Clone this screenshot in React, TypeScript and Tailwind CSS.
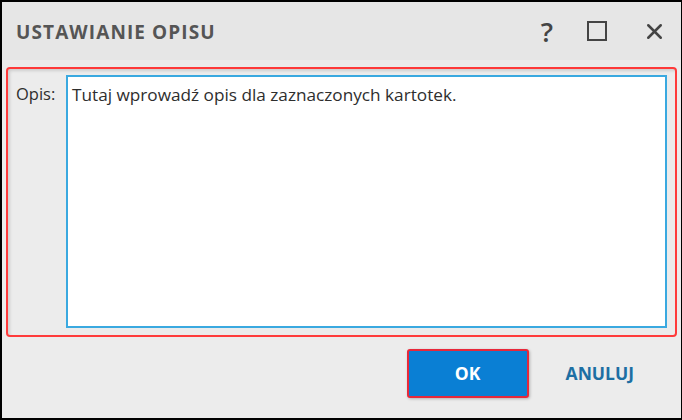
import { X } from "lucide-react";

export default function App() {
    return <>
        <div className="w-[682px] h-[420px] flex flex-col bg-[#ececec] border-2 border-r border-black" style={{ fontFamily: '"Open Sans", "Liberation Sans", sans-serif' }}>
            {/* title bar */}
            <div className="flex items-center h-[58px] shrink-0 bg-[#e6e6e6] pl-[14px] pr-[14px]">
                <h1 className="text-[19px] font-bold text-[#555555] tracking-[1.1px] flex-1 pt-[2px]">USTAWIANIE OPISU</h1>
                <div className="flex items-center text-[#444444]">
                    <span className="text-[27px] leading-none font-semibold w-[14px] text-center mr-[33px]">?</span>
                    <div className="w-[20px] h-[20px] border-[2.5px] border-[#444444] mr-[35px]" />
                    <X className="w-[25px] h-[25px]" strokeWidth={2.4} />
                </div>
            </div>

            {/* content */}
            <div className="flex-1 flex flex-col px-[4px] pt-[7px]">
                <div className="flex h-[270px] border-2 border-[#ff3b3b] rounded-[4px] shadow-[inset_2px_2px_3px_rgba(0,0,0,0.12)] pl-[8px] pr-[8px] pt-[6px] pb-[7px]">
                    <label className="w-[50px] text-[16.5px] text-[#2e2e2e] pt-[7px]">Opis:</label>
                    <div className="flex-1 bg-white border-2 border-[#3aa9e0] px-[4px] pt-[5px] text-[17.2px] text-[#2e2e2e]">
                        Tutaj wprowadź opis dla zaznaczonych kartotek.
                    </div>
                </div>

                <div className="flex items-center justify-end pt-[12px] pr-[43px] gap-[37px]">
                    <button className="w-[122px] h-[49px] rounded-[3px] bg-[#0a7fd4] border-2 border-[#e8283a] text-white font-bold text-[17.5px] shadow-[1px_1px_3px_rgba(0,0,0,0.25)]">OK</button>
                    <button className="text-[#1d6fa3] font-bold text-[17.5px]">ANULUJ</button>
                </div>
            </div>
        </div>
    </>
}
